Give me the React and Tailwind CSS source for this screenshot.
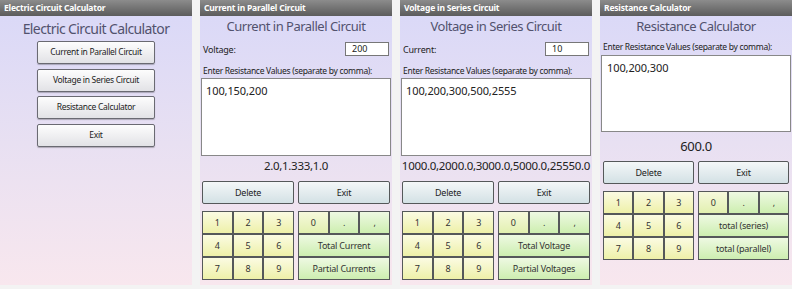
import React from 'react'

const font = { fontFamily: '"Noto Sans", "Open Sans", sans-serif' }

function TitleBar({ title }) {
	return (
		<div className="h-[16px] bg-linear-to-b from-[#8c8c8c] to-[#5c5c5c] px-[4px] text-[8.5px] font-bold leading-[16px] tracking-[-0.2px] text-white">
			{title}
		</div>
	)
}

function Panel({ title, children }) {
	return (
		<div className="flex h-[285px] flex-col bg-linear-to-b from-[#d9d8f8] via-[#e8e0f2] to-[#f8e7ee]">
			<TitleBar title={title} />
			{children}
		</div>
	)
}

function Heading({ children }) {
	return <div className="h-[20px] text-center text-[13px] leading-[20px] tracking-[-0.5px] text-[#52526e]">{children}</div>
}

function MenuButton({ label }) {
	return (
		<div className="flex h-[23px] w-[118px] items-center justify-center rounded-[2px] border border-[#6a6a72] bg-linear-to-b from-[#fdfdfd] to-[#e2e2e6] text-[8.5px] tracking-[-0.3px] text-[#222] shadow-[0_1px_1px_rgba(0,0,0,0.25)]">
			{label}
		</div>
	)
}

function BlueButton({ label }) {
	return (
		<div className="flex h-[23px] flex-1 items-center justify-center rounded-[2px] border border-[#55585a] bg-linear-to-b from-[#f4f7f8] to-[#d3e1e5] text-[9px] tracking-[-0.2px] text-[#222]">
			{label}
		</div>
	)
}

function Key({ label, tone }) {
	const cls =
		tone === 'yellow'
			? 'from-[#fbfbe2] to-[#eef0a8]'
			: tone === 'lime'
				? 'from-[#f6f9dc] to-[#e2f0b0]'
				: 'from-[#eef9e2] to-[#cdeeb0]'
	return (
		<div className={`flex h-[23px] items-center justify-center border border-[#55585a] bg-linear-to-b ${cls} text-[9px] tracking-[-0.2px] text-[#333]`}>
			{label}
		</div>
	)
}

function Keypad({ total, partial }) {
	return (
		<div className="flex gap-[4px] px-[2px]">
			<div className="grid flex-1 grid-cols-3">
				{['1', '2', '3', '4', '5', '6', '7', '8', '9'].map((n) => (
					<Key key={n} label={n} tone="yellow" />
				))}
			</div>
			<div className="grid flex-1 grid-cols-3">
				<Key label="0" tone="lime" />
				<Key label="." tone="green" />
				<Key label="," tone="green" />
				<div className="col-span-3">
					<Key label={total} tone="green" />
				</div>
				<div className="col-span-3">
					<Key label={partial} tone="green" />
				</div>
			</div>
		</div>
	)
}

function CircuitPanel({ title, field, fieldValue, values, result, total, partial }) {
	return (
		<Panel title={title}>
			<Heading>{title}</Heading>
			<div className="mt-[6px] flex h-[14px] items-center justify-between pl-[3px] pr-[3px]">
				<span className="pt-[2px] text-[9px] tracking-[-0.2px] text-[#222]">{field}</span>
				<div className="h-[14px] w-[44px] border border-[#777] bg-white pl-[6px] text-[9px] leading-[12px] text-[#222]">
					{fieldValue}
				</div>
			</div>
			<div className="mt-[9px] h-[12px] px-[3px] text-[8.5px] leading-[12px] tracking-[-0.3px] text-[#222]">
				Enter Resistance Values (separate by comma):
			</div>
			<div className="mx-[1px] mt-[1px] h-[78px] border border-[#888] bg-white px-[4px] pt-[4px] text-[11px] tracking-[-0.1px] text-[#222]">
				{values}
			</div>
			<div className="mt-[2px] h-[16px] text-center text-[11.5px] leading-[16px] tracking-[-0.3px] text-[#222]">{result}</div>
			<div className="mt-[7px] flex gap-[4px] px-[2px]">
				<BlueButton label="Delete" />
				<BlueButton label="Exit" />
			</div>
			<div className="mt-[7px]">
				<Keypad total={total} partial={partial} />
			</div>
		</Panel>
	)
}

export default function App() {
	return (
		<div className="grid h-[289px] w-[792px] grid-cols-4 gap-[8px] bg-[#f3f3f3]" style={font}>
			<Panel title="Electric Circuit Calculator">
				<div className="mt-[3px] h-[20px] text-center text-[14px] leading-[20px] tracking-[-0.6px] text-[#52526e]">Electric Circuit Calculator</div>
				<div className="mt-[2px] flex flex-col items-center gap-[4.5px]">
					<MenuButton label="Current in Parallel Circuit" />
					<MenuButton label="Voltage in Series Circuit" />
					<MenuButton label="Resistance Calculator" />
					<MenuButton label="Exit" />
				</div>
			</Panel>

			<CircuitPanel
				title="Current in Parallel Circuit"
				field="Voltage:"
				fieldValue="200"
				values="100,150,200"
				result="2.0,1.333,1.0"
				total="Total Current"
				partial="Partial Currents"
			/>

			<CircuitPanel
				title="Voltage in Series Circuit"
				field="Current:"
				fieldValue="10"
				values="100,200,300,500,2555"
				result="1000.0,2000.0,3000.0,5000.0,25550.0"
				total="Total Voltage"
				partial="Partial Voltages"
			/>

			<Panel title="Resistance Calculator">
				<Heading>Resistance Calculator</Heading>
				<div className="mt-[5px] h-[12px] px-[3px] text-[8.5px] leading-[12px] tracking-[-0.3px] text-[#222]">
					Enter Resistance Values (separate by comma):
				</div>
				<div className="mx-[1px] mt-[2px] h-[77px] border border-[#888] bg-white px-[5px] pt-[4px] text-[11px] tracking-[-0.1px] text-[#222]">
					100,200,300
				</div>
				<div className="mt-[4px] h-[20px] text-center text-[13px] leading-[20px] tracking-[-0.3px] text-[#222]">600.0</div>
				<div className="mt-[5px] flex gap-[4px] px-[3px]">
					<BlueButton label="Delete" />
					<BlueButton label="Exit" />
				</div>
				<div className="mt-[7px] px-[1px]">
					<Keypad total="total (series)" partial="total (parallel)" />
				</div>
			</Panel>
		</div>
	)
}
